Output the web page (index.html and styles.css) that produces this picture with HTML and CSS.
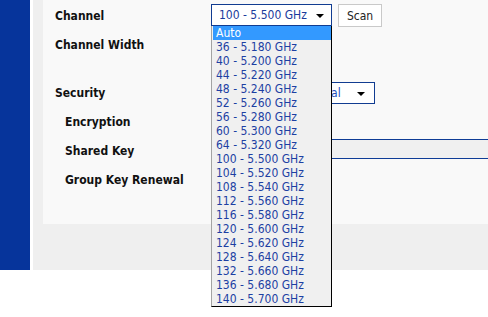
FILE: index.html
```html
<!DOCTYPE html>
<html lang="en">
<head>
    <meta charset="UTF-8">
    <meta name="viewport" content="width=device-width, initial-scale=1.0">
    <title>Wireless Settings</title>
    <link rel="stylesheet" href="styles.css">
</head>
<body>
    <div class="page">
        <div class="sidebar"></div>

        <div class="main">
            <div class="panel">
                <div class="row row-first">
                    <label>Channel</label>
                    <div class="field">
                        <div class="select select-channel">
                            <span class="value">100 - 5.500 GHz</span>
                            <span class="caret"></span>

                            <!-- opened list of the channel select -->
                            <ul class="options">
                                <li class="selected">Auto</li>
                                <li>36 - 5.180 GHz</li>
                                <li>40 - 5.200 GHz</li>
                                <li>44 - 5.220 GHz</li>
                                <li>48 - 5.240 GHz</li>
                                <li>52 - 5.260 GHz</li>
                                <li>56 - 5.280 GHz</li>
                                <li>60 - 5.300 GHz</li>
                                <li>64 - 5.320 GHz</li>
                                <li>100 - 5.500 GHz</li>
                                <li>104 - 5.520 GHz</li>
                                <li>108 - 5.540 GHz</li>
                                <li>112 - 5.560 GHz</li>
                                <li>116 - 5.580 GHz</li>
                                <li>120 - 5.600 GHz</li>
                                <li>124 - 5.620 GHz</li>
                                <li>128 - 5.640 GHz</li>
                                <li>132 - 5.660 GHz</li>
                                <li>136 - 5.680 GHz</li>
                                <li>140 - 5.700 GHz</li>
                            </ul>
                        </div>
                        <button class="btn-scan">Scan</button>
                    </div>
                </div>

                <div class="row">
                    <label>Channel Width</label>
                    <div class="field">
                        <div class="select select-small">
                            <span class="value">20/40 MHz</span>
                            <span class="caret"></span>
                        </div>
                    </div>
                </div>

                <div class="spacer"></div>

                <div class="row">
                    <label>Security</label>
                    <div class="field">
                        <div class="select select-security">
                            <span class="value">WPA/WPA2 - Personal</span>
                            <span class="caret"></span>
                        </div>
                    </div>
                </div>

                <div class="row sub">
                    <label>Encryption</label>
                    <div class="field">
                        <div class="select select-small">
                            <span class="value">AES</span>
                            <span class="caret"></span>
                        </div>
                    </div>
                </div>

                <div class="row sub">
                    <label>Shared Key</label>
                    <div class="field">
                        <input type="text" class="input-key" value="">
                    </div>
                </div>

                <div class="row sub">
                    <label>Group Key Renewal</label>
                    <div class="field">
                        <input type="text" class="input-small" value="3600">
                    </div>
                </div>
            </div>
        </div>
    </div>
</body>
</html>
```

FILE: styles.css
```css
html {
    overflow: hidden;
}

body {
    margin: 0;
    min-height: 317px;
    background-color: #ffffff;
    font-family: "DejaVu Sans Condensed", "DejaVu Sans", Verdana, sans-serif;
    font-stretch: condensed;
    font-size: 12px;
}

.page {
    display: flex;
    height: 270px;
}

.sidebar {
    flex-shrink: 0;
    width: 30px;
    background-color: #06349b;
}

.main {
    flex: 1;
    min-width: 0;
    margin-left: 3px;
    padding-left: 10px;
    background-color: #efefef;
}

.panel {
    height: 224px;
    padding: 2px 0 0 12px;
    box-sizing: border-box;
    background-color: #f9f9f9;
}

.row {
    display: grid;
    grid-template-columns: 156px auto;
    align-items: center;
    height: 29px;
}

.row-first {
    height: 28px;
}

.row label {
    font-weight: bold;
    font-size: 12px;
    color: #111111;
}

.row.sub label {
    padding-left: 10px;
}

.spacer {
    height: 19px;
}

.field {
    display: flex;
    align-items: center;
}

.select {
    position: relative;
    box-sizing: border-box;
    height: 22px;
    padding-left: 7px;
    border: 1px solid #113c91;
    background-color: #ffffff;
    color: #1b3b9c;
    line-height: 20px;
    white-space: nowrap;
}

.select .value {
    display: inline-block;
}

.caret {
    position: absolute;
    right: 7px;
    top: 9px;
    width: 0;
    height: 0;
    border-left: 4px solid transparent;
    border-right: 4px solid transparent;
    border-top: 4px solid #000000;
}

.select-channel {
    width: 121px;
    margin-top: -2px;
}

.select-small {
    width: 100px;
}

.select-security {
    width: 164px;
    padding-left: 14px;
    color: #2450bd;
}

.select-security .caret {
    right: 9px;
}

.options {
    position: absolute;
    top: 100%;
    left: -1px;
    z-index: 10;
    width: 121px;
    margin: 1px 0 0 0;
    padding: 0;
    list-style: none;
    box-sizing: border-box;
    background-color: #f0f0f0;
    border-left: 1px solid #a3a3a3;
    border-right: 1px solid #000000;
    border-bottom: 1px solid #000000;
    color: #1d3fa3;
}

.options li {
    height: 14px;
    line-height: 14px;
    padding-left: 4px;
}

.options li.selected {
    margin-left: 1px;
    padding-left: 3px;
    background-color: #3399ff;
    color: #ffffff;
}

.btn-scan {
    height: 23px;
    width: 44px;
    margin-top: -1px;
    margin-left: 6px;
    padding: 0;
    border: 1px solid #c9c9c9;
    background-color: #ffffff;
    font-family: "DejaVu Sans Condensed", "DejaVu Sans", Verdana, sans-serif;
    font-stretch: condensed;
    font-size: 12px;
    color: #222222;
}

input[type="text"] {
    box-sizing: border-box;
    height: 20px;
    margin-bottom: 3px;
    border: 1px solid #0e3c96;
    background-color: #f0f0f0;
    font-family: "DejaVu Sans Condensed", "DejaVu Sans", Verdana, sans-serif;
    font-size: 12px;
}

.input-key {
    width: 300px;
}

.input-small {
    width: 80px;
}
```
